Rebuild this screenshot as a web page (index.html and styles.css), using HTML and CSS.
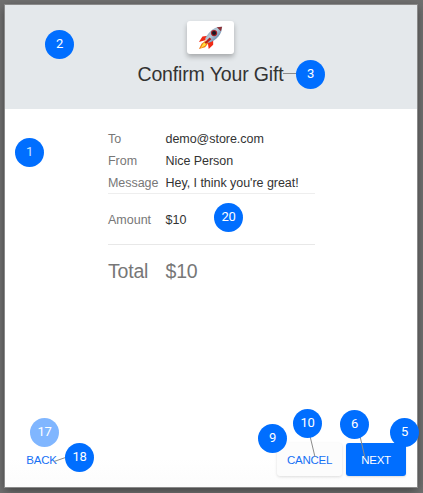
FILE: index.html
```html
<!DOCTYPE html>
<html lang="en">
<head>
<meta charset="utf-8">
<title>Confirm Your Gift</title>
<link rel="stylesheet" href="styles.css">
</head>
<body>
<main class="dialog">
  <header class="header">
    <div class="logo">
      <svg width="25" height="25" viewBox="0 0 28 28">
        <defs><linearGradient id="hull" x1="0" y1="0" x2="1" y2="1"><stop offset="0" stop-color="#55758f"/><stop offset=".45" stop-color="#b9cbda"/><stop offset="1" stop-color="#244f83"/></linearGradient></defs>
        <path d="M9 17 L4 21 L1 27 L8 25 L12 20Z" fill="#f47b16"/>
        <path d="M8 18 L5 22 L3 26 L8 23 L10 20Z" fill="#ffe13d"/>
        <path d="M11 12 L5 13 L1 19 L8 17Z M17 16 L17 22 L12 27 L11 20Z" fill="#f02b16"/>
        <path d="M27 2 C20 1 13 6 8 15 L12 20 C21 17 27 10 27 2Z" fill="url(#hull)"/>
        <path d="M27 2 L21 2.5 L25.7 7Z" fill="#8d3035"/>
        <path d="M13 14 L7 20 L9 21 L15 16Z" fill="#b71f1b"/>
        <circle cx="18" cy="9" r="3.5" fill="#a51b23"/><circle cx="18" cy="9" r="2.3" fill="#171925"/>
      </svg>
    </div>
    <h1 class="title">Confirm Your Gift</h1>
  </header>
  <section class="details">
    <dl class="rows">
      <dt>To</dt><dd>demo@store.com</dd>
      <dt>From</dt><dd>Nice Person</dd>
      <dt>Message</dt><dd class="message">Hey, I think you're great!</dd>
    </dl>
    <dl class="amount"><dt>Amount</dt><dd>$10</dd></dl>
    <dl class="total"><dt>Total</dt><dd>$10</dd></dl>
  </section>
  <footer class="footer">
    <button class="back">BACK</button>
    <button class="cancel">CANCEL</button>
    <button class="next">NEXT</button>
  </footer>
</main>
<div class="notes">
  <svg class="leaders" width="423" height="493"><path d="M283 73.5H298M54 461.5L67 457M310 436L315 457M360 436L365 458"/></svg>
  <span class="pin p1">1</span><span class="pin p2">2</span><span class="pin p3">3</span>
  <span class="pin p20">20</span><span class="pin p17">17</span><span class="pin p18">18</span>
  <span class="pin p9">9</span><span class="pin p10">10</span><span class="pin p6">6</span><span class="pin p5">5</span>
</div>
</body>
</html>
```
FILE: styles.css
```css
* { box-sizing: border-box; }
body { margin: 0; width: 423px; height: 493px; padding: 5px 6px 6px 5px; overflow: hidden; position: relative; background: #707070; font-family: "Liberation Sans", Arial, sans-serif; }
.dialog { height: 482px; display: flex; flex-direction: column; background: linear-gradient(#fff 94%, #fcfcfc); box-shadow: 0 0 0 1px #8a8a8a, 0 3px 9px #3c3c3c; }
.header { height: 104px; flex: none; display: flex; flex-direction: column; align-items: center; padding: 16px 1px 0 0; background: #e4e8eb; }
.logo { width: 47px; height: 33px; display: flex; align-items: center; justify-content: center; background: #fff; border-radius: 3px; box-shadow: 0 3px 5px #0004; }
.title { margin: 8px 0 0; font-size: 19.5px; line-height: 24px; font-weight: 400; color: #333; letter-spacing: -.14px; white-space: nowrap; }
.details { width: 207px; margin: 19px 0 0 103px; flex: 1; }
dl { margin: 0; display: grid; grid-template-columns: 58px 1fr; white-space: nowrap; }
dt { color: #777; }
dd { margin: 0 0 0 -.5px; color: #333; }
.rows { height: 66px; grid-auto-rows: 22px; line-height: 22px; font-size: 12.5px; letter-spacing: -.04px; border-bottom: 1px solid #eee; }
.amount { height: 51px; padding-top: 1px; line-height: 50px; font-size: 12.5px; border-bottom: 1px solid #e8e8e8; }
.total { height: 52px; line-height: 52px; font-size: 19.5px; letter-spacing: -.2px; }
.total dd { color: #777; }
.footer { height: 44px; flex: none; display: flex; padding: 0 11px 11px 13px; }
button { height: 33px; padding: 1px 0 0; border: 0; border-radius: 3px; font: 11.5px/32px "Liberation Sans", Arial, sans-serif; letter-spacing: -.25px; color: #1671f5; background: transparent; white-space: nowrap; }
.back { width: 47px; margin-right: auto; }
.cancel { width: 65px; margin-right: 4px; background: #fcfcfc; box-shadow: 0 1px 3px #0002; }
.next { width: 60px; color: #fff; background: #006eff; box-shadow: 0 1px 2px #0002; }
.notes { position: absolute; inset: 0; }
.leaders { display: block; fill: none; stroke: #8b8b8b; stroke-width: 1; }
.pin { position: absolute; width: 29px; height: 29px; border-radius: 50%; background: #006eff; color: #fff; font: 400 13px/28px Roboto, sans-serif; letter-spacing: -.2px; text-align: center; }
.p1 { left: 15px; top: 138px; color: #cce2ff; }
.p2 { left: 45px; top: 30px; }
.p3 { left: 296px; top: 60px; }
.p20 { left: 214px; top: 203px; }
.p17 { left: 30px; top: 418px; background: #80b6ff; }
.p18 { left: 65px; top: 443px; }
.p9 { left: 258px; top: 424px; }
.p10 { left: 293px; top: 409px; }
.p6 { left: 340px; top: 410px; }
.p5 { left: 390px; top: 418px; }
```
